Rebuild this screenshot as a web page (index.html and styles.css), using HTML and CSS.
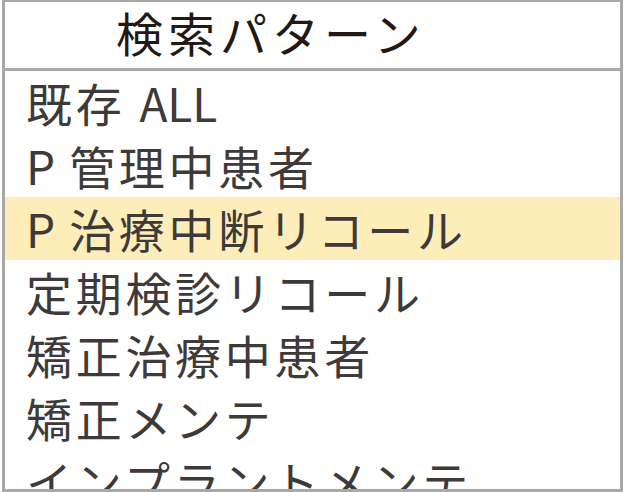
FILE: index.html
```html
<!DOCTYPE html>
<html lang="ja">
<head>
<meta charset="utf-8">
<link rel="stylesheet" href="styles.css">
</head>
<body>
<div class="panel">
  <div class="header">検索パターン</div>
  <ul class="list">
    <li class="row">既存 <span class="latin">ALL</span></li>
    <li class="row"><span class="latin">P</span> 管理中患者</li>
    <li class="row selected"><span class="latin">P</span> 治療中断リコール</li>
    <li class="row">定期検診リコール</li>
    <li class="row">矯正治療中患者</li>
    <li class="row">矯正メンテ</li>
    <li class="row">インプラントメンテ</li>
  </ul>
</div>
</body>
</html>
```
FILE: styles.css
```css
html, body {
  margin: 0;
  padding: 0;
  background: #ffffff;
}
body {
  width: 624px;
  height: 492px;
  overflow: hidden;
  font-family: "Noto Sans CJK JP", "Noto Sans", sans-serif;
}
.panel {
  box-sizing: border-box;
  margin-left: 2px;
  width: 621px;
  height: 492px;
  border: 2px solid #a8a8a8;
  border-width: 2px 3px 3px 3px;
  background: #ffffff;
  display: flex;
  flex-direction: column;
}
.header {
  box-sizing: border-box;
  flex: none;
  height: 69px;
  padding-left: 111px;
  border-bottom: 3px solid #a8a8a8;
  font-size: 47px;
  line-height: 59px;
  letter-spacing: 5px;
  color: #231815;
}
.list {
  flex: 1;
  min-height: 0;
  overflow: hidden;
  list-style: none;
  margin: 0;
  padding: 0;
}
.row {
  height: 63px;
  line-height: 63px;
  padding-left: 21px;
  font-size: 46px;
  letter-spacing: 3.7px;
  color: #3e3a39;
  white-space: nowrap;
}
.latin {
  letter-spacing: 0;
}
.row.selected {
  background: #fdedb9;
}
```
